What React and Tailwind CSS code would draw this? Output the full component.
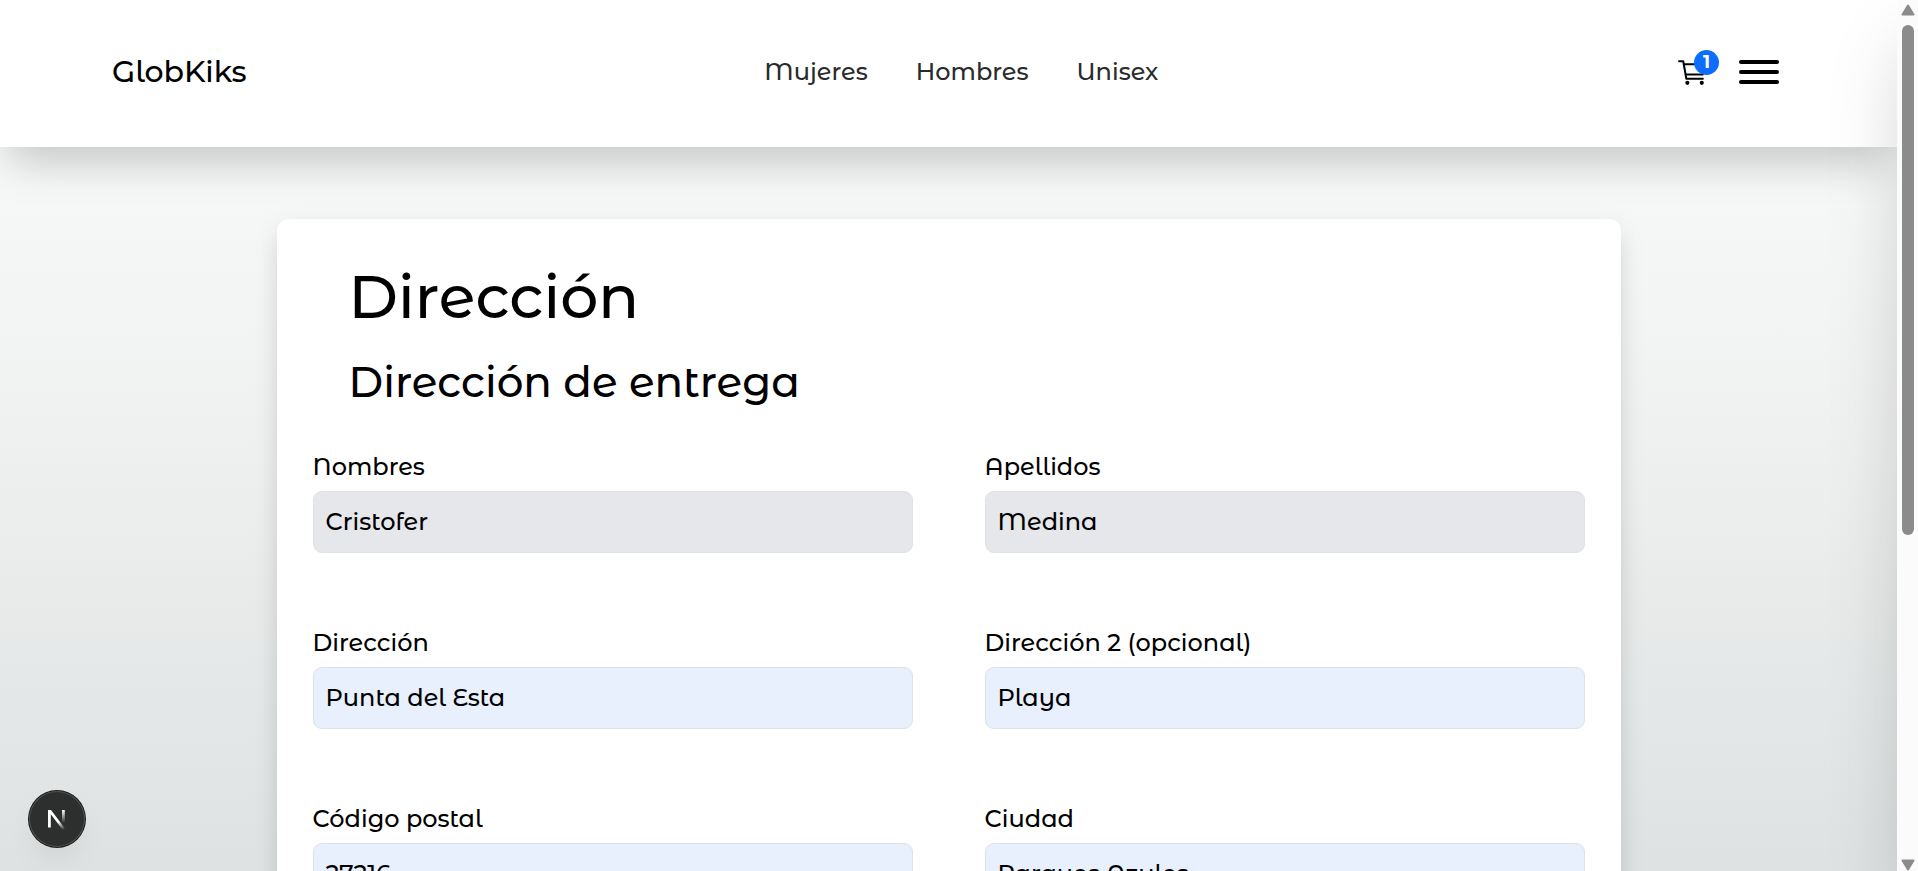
import { IoCartOutline } from "react-icons/io5";

const sections = ["Mujeres", "Hombres", "Unisex"];

const fields = [
  { id: "nombres", label: "Nombres", value: "Cristofer", readOnly: true },
  { id: "apellidos", label: "Apellidos", value: "Medina", readOnly: true },
  { id: "direccion", label: "Dirección", value: "Punta del Esta" },
  { id: "direccion2", label: "Dirección 2 (opcional)", value: "Playa" },
  { id: "codigo", label: "Código postal", value: "27216" },
  { id: "ciudad", label: "Ciudad", value: "Parques Azules" },
];

function Header() {
  return (
    <header className="flex items-center justify-between bg-white px-28 pt-[54px] pb-[57px] shadow-[0_22px_44px_-8px_rgba(0,0,0,0.21)]">
      <a href="#inicio" className="text-3xl leading-9">GlobKiks</a>
      <nav className="flex gap-12 text-2xl leading-9 text-[#292b2d]">
        {sections.map((name) => (
          <a key={name} href={"#" + name}>{name}</a>
        ))}
      </nav>
      <div className="flex items-center gap-[30px] pr-1.5">
        <button type="button" aria-label="Carrito" className="relative">
          <IoCartOutline size={33} />
          <span className="absolute -top-1.5 left-[18px] flex size-[25px] items-center justify-center rounded-full bg-[#0d6efd] text-lg font-bold text-white">1</span>
        </button>
        <button type="button" aria-label="Menú" className="flex w-10 flex-col gap-1.5">
          <span className="h-1 rounded-full bg-black" />
          <span className="h-1 rounded-full bg-black" />
          <span className="h-1 rounded-full bg-black" />
        </button>
      </div>
    </header>
  );
}

function Field({ id, label, value, readOnly }) {
  return (
    <div>
      <label htmlFor={id} className="mb-1.5 block">{label}</label>
      <input
        id={id}
        defaultValue={value}
        readOnly={readOnly}
        className={
          "block w-full rounded-[9px] border border-[#dee2e6] px-3 py-3 " +
          (readOnly ? "bg-[#e5e7eb]" : "bg-[#e8f0fe]")
        }
      />
    </div>
  );
}

function NextBadge() {
  return (
    <button
      type="button"
      aria-label="Next.js"
      className="fixed bottom-6 left-[29px] flex size-14 items-center justify-center rounded-full bg-[#2d2f2e] shadow-[0_0_0_1px_#171717,inset_0_0_0_1px_#505050,0_16px_32px_-8px_rgba(0,0,0,0.1)]"
    >
      <svg className="size-6" viewBox="0 0 24 24" fill="none">
        <defs>
          <linearGradient id="diagonal" x1="14" y1="14" x2="20" y2="22" gradientUnits="userSpaceOnUse">
            <stop stopColor="#fff" />
            <stop offset="1" stopColor="#fff" stopOpacity="0" />
          </linearGradient>
          <linearGradient id="stem" x1="18" y1="3" x2="18" y2="16" gradientUnits="userSpaceOnUse">
            <stop stopColor="#fff" />
            <stop offset="1" stopColor="#fff" stopOpacity="0" />
          </linearGradient>
        </defs>
        <path d="M3 3h3l14 18.500-2.200 1.500L5.800 7.300V20.500H3Z" fill="url(#diagonal)" />
        <path d="M17 3h2.800v13H17Z" fill="url(#stem)" />
      </svg>
    </button>
  );
}

export default function App() {
  return (
    <div className="flex h-screen overflow-hidden bg-[#fbfbfb] font-['Montserrat_Alternates','Montserrat','Inter',sans-serif] text-2xl leading-9 font-medium text-black">
      <div className="relative min-w-0 flex-1 overflow-hidden bg-linear-to-b from-[#fcfefd] via-[#eff0f0] to-[#dee2e2]">
        <Header />
        <main className="relative mx-auto mt-18 w-full max-w-[1344px] rounded-xl bg-white px-9 pt-10 pb-18 shadow-[0_15px_23px_-4px_rgba(0,0,0,0.1),0_6px_30px_-2px_rgba(0,0,0,0.08)]">
          <h1 className="px-9 text-6xl leading-19">Dirección</h1>
          <h2 className="mt-[17px] px-9 text-[42px] leading-15">Dirección de entrega</h2>
          <form className="mt-[37px] grid grid-cols-2 gap-18">
            {fields.map((f) => (
              <Field key={f.id} {...f} />
            ))}
          </form>
        </main>
        <div className="pointer-events-none absolute top-0 left-full h-full w-160 shadow-[0_40px_72px_-8px_rgba(0,0,0,0.18)]" />
      </div>
      <div aria-hidden="true" className="flex w-[21px] flex-col items-center pt-1">
        <svg className="h-3 w-[14px] shrink-0" viewBox="0 0 14 12"><path d="M7 1.500 12.500 10.500H1.500Z" fill="#8b8b8b" stroke="#8b8b8b" strokeWidth="2" strokeLinejoin="round" /></svg>
        <span className="mt-[9px] h-[510px] max-h-[59%] w-3 rounded-full bg-[#8b8b8b]" />
        <svg className="mt-auto h-3 w-[14px] shrink-0" viewBox="0 0 14 12"><path d="M7 10.500 12.500 1.500H1.500Z" fill="#8b8b8b" stroke="#8b8b8b" strokeWidth="2" strokeLinejoin="round" /></svg>
      </div>
      <NextBadge />
    </div>
  );
}
